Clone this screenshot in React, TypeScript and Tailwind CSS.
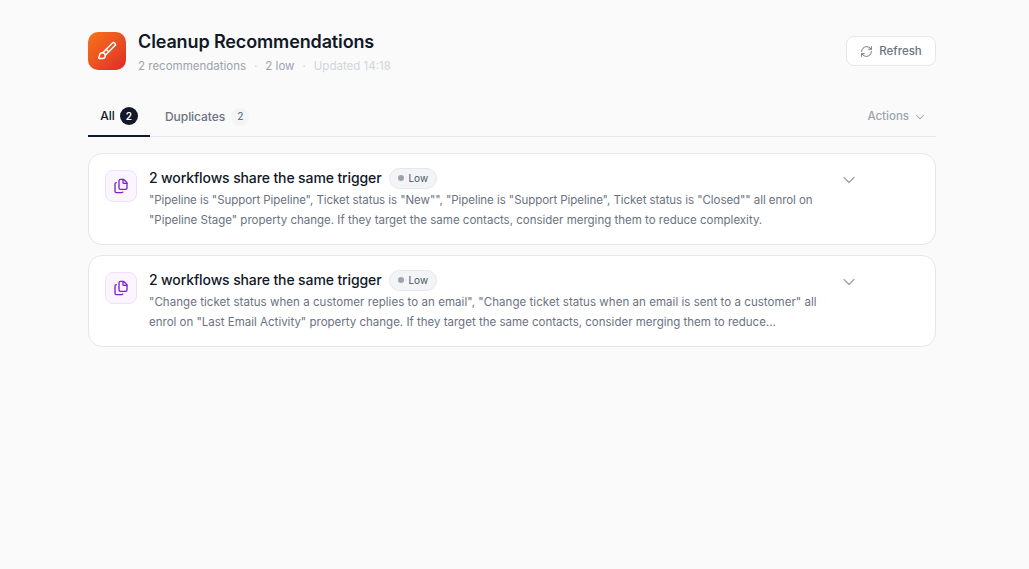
import { Brush, ChevronDown, Files, RefreshCw } from "lucide-react";

type Line = {
  text: string;
  tracking?: string;
};

type Rec = {
  title: string;
  lines: Line[];
};

const recs: Rec[] = [
  {
    title: "2 workflows share the same trigger",
    lines: [
      {
        text: `"Pipeline is "Support Pipeline", Ticket status is "New"", "Pipeline is "Support Pipeline", Ticket status is "Closed"" all enrol on`,
        tracking: "tracking-[-0.06px]",
      },
      { text: `"Pipeline Stage" property change. If they target the same contacts, consider merging them to reduce complexity.` },
    ],
  },
  {
    title: "2 workflows share the same trigger",
    lines: [
      {
        text: `"Change ticket status when a customer replies to an email", "Change ticket status when an email is sent to a customer" all`,
        tracking: "tracking-[0.05px]",
      },
      { text: `enrol on "Last Email Activity" property change. If they target the same contacts, consider merging them to reduce...` },
    ],
  },
];

function RecCard({ title, lines }: Rec) {
  return (
    <div className="flex h-[92px] rounded-[14px] border border-[#e5e7eb] bg-white pl-4 pt-4">
      <div className="flex h-8 w-8 shrink-0 items-center justify-center rounded-lg border border-[#f0dffc] bg-[#faf5ff]">
        <Files size={16} strokeWidth={2} className="text-[#7e22ce]" />
      </div>
      <div className="ml-3 w-[676px]">
        <div className="-mt-px flex h-4 items-center">
          <h3 className="text-[14px] font-medium tracking-[-0.12px] text-[#111827]">{title}</h3>
          <span className="ml-2 mt-[2px] flex h-[21px] items-center gap-1 rounded-full border border-[#e5e7eb] bg-[#f3f4f6] px-2 text-[10px] font-normal text-[#4b5563]">
            <span className="h-[6px] w-[6px] rounded-full bg-[#9ca3af]" />
            Low
          </span>
        </div>
        <div className="mt-[5px] text-[11.5px] leading-[20px] text-[#6b7280]">
          {lines.map((l) => (
            <p key={l.text} className={`whitespace-nowrap ${l.tracking ?? ""}`}>
              {l.text}
            </p>
          ))}
        </div>
      </div>
      <ChevronDown size={20} strokeWidth={1.5} className="ml-[14px] text-[#9ca3af]" />
    </div>
  );
}

export default function App() {
  return (
    <div className="min-h-[569px] bg-[#fafafa] pl-[88px] pt-8 font-['Inter',sans-serif]">
      <div className="w-[848px]">
        <header className="flex items-start justify-between">
          <div className="flex items-start gap-3">
            <div className="flex h-[38px] w-[38px] items-center justify-center rounded-[10px] bg-gradient-to-br from-[#f97316] to-[#dc2626]">
              <Brush size={20} strokeWidth={1.75} className="text-white" />
            </div>
            <div>
              <h1 className="text-[18px] font-semibold leading-[20px] tracking-[-0.13px] text-[#111827]">
                Cleanup Recommendations
              </h1>
              <div className="mt-[6px] flex items-center text-[11.5px] leading-[16px]">
                <span className="text-[#9ca3af]">2 recommendations</span>
                <span className="mx-2 text-[#d1d5db]">·</span>
                <span className="text-[#9ca3af]">2 low</span>
                <span className="mx-2 text-[#d1d5db]">·</span>
                <span className="text-[#d1d5db]">Updated 14:18</span>
              </div>
            </div>
          </div>
          <button className="mt-1 flex h-[30px] w-[90px] items-center justify-center gap-[6px] rounded-lg border border-[#e5e7eb] bg-white text-[11.5px] font-medium text-[#6b7280]">
            <RefreshCw size={13} strokeWidth={1.75} />
            <span className="pt-px">Refresh</span>
          </button>
        </header>

        <nav className="mt-[21px] flex h-[42px] items-center border-b border-[#e5e7eb] pt-[2px]">
          <div className="-mb-px flex h-10 w-[62px] items-center justify-center gap-[5px] self-end border-b-2 border-[#111827] text-[12px] font-medium text-[#111827]">
            All
            <span className="flex h-[18px] w-[18px] items-center justify-center rounded-full bg-[#111827] text-[10px] font-semibold text-white">
              2
            </span>
          </div>
          <div className="ml-[15px] flex items-center gap-[6px] text-[12px] font-medium tracking-[-0.05px] text-[#6b7280]">
            Duplicates
            <span className="flex h-[18px] w-[18px] items-center justify-center rounded-full bg-[#f3f4f6] text-[10px] font-medium text-[#6b7280]">
              2
            </span>
          </div>
          <div className="ml-auto mr-[9px] flex items-center gap-1 text-[11.5px] font-medium text-[#9ca3af]">
            Actions
            <ChevronDown size={14} strokeWidth={1.75} />
          </div>
        </nav>

        <div className="mt-4 flex flex-col gap-[10px]">
          {recs.map((r) => (
            <RecCard key={r.lines[0].text} {...r} />
          ))}
        </div>
      </div>
    </div>
  );
}
